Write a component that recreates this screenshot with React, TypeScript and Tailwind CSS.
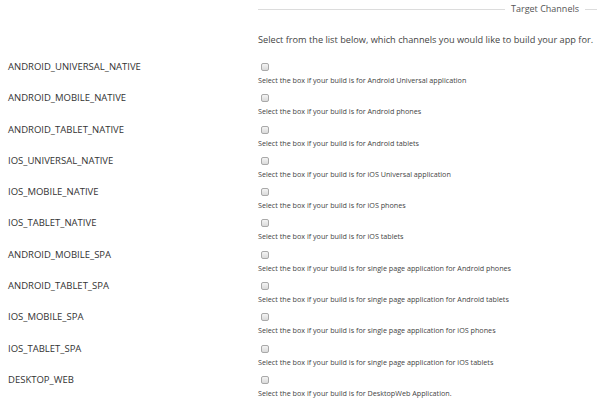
import React from "react";

const rows: [string, string][] = [
  ["ANDROID_UNIVERSAL_NATIVE", "Select the box if your build is for Android Universal application"],
  ["ANDROID_MOBILE_NATIVE", "Select the box if your build is for Android phones"],
  ["ANDROID_TABLET_NATIVE", "Select the box if your build is for Android tablets"],
  ["IOS_UNIVERSAL_NATIVE", "Select the box if your build is for iOS Universal application"],
  ["IOS_MOBILE_NATIVE", "Select the box if your build is for iOS phones"],
  ["IOS_TABLET_NATIVE", "Select the box if your build is for iOS tablets"],
  ["ANDROID_MOBILE_SPA", "Select the box if your build is for single page application for Android phones"],
  ["ANDROID_TABLET_SPA", "Select the box if your build is for single page application for Android tablets"],
  ["IOS_MOBILE_SPA", "Select the box if your build is for single page application for iOS phones"],
  ["IOS_TABLET_SPA", "Select the box if your build is for single page application for iOS tablets"],
  ["DESKTOP_WEB", "Select the box if your build is for DesktopWeb Application."],
];

export default function App() {
  return (
    <div
      className="w-[600px] h-[413px] bg-white overflow-hidden text-[#333]"
      style={{ fontFamily: '"Open Sans", "Segoe UI", sans-serif' }}
    >
      <div className="pl-[258px] pr-[3px] pt-[4px] flex items-center h-[14px]">
        <div className="flex-1 h-px bg-[#dcdcdc]" />
        <span className="px-[6px] text-[9px] leading-[12px] text-[#555]">Target Channels</span>
        <div className="w-[12px] h-px bg-[#dcdcdc]" />
      </div>
      <div className="pl-[258px] pt-[20px] h-[46px] text-[9.2px] leading-[12px] text-[#444] whitespace-nowrap">
        Select from the list below, which channels you would like to build your app for.
      </div>
      <div className="flex flex-col pl-[8px]">
        {rows.map(([label, desc]) => (
          <div key={label} className="flex h-[31.3px]">
            <div className="w-[250px] text-[9.5px] leading-[14px] text-[#333]">{label}</div>
            <div className="flex flex-col">
              <span className="mt-[3px] ml-[3px] w-[8px] h-[8px] rounded-[2px] border border-[#a9a9a9] bg-gradient-to-b from-[#f4f4f4] to-[#dadada]" />
              <span className="mt-[4px] text-[7.2px] leading-[10px] text-[#444] whitespace-nowrap">{desc}</span>
            </div>
          </div>
        ))}
      </div>
    </div>
  );
}
